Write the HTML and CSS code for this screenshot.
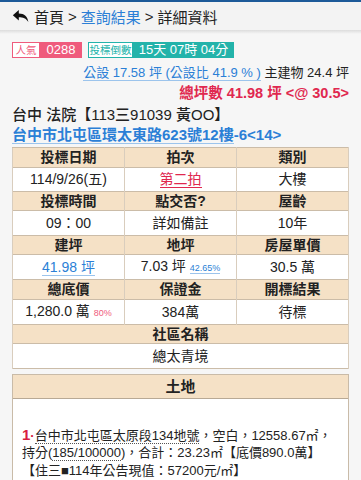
FILE: index.html
```html
<!DOCTYPE html>
<html lang="zh-Hant">
<head>
<meta charset="utf-8">
<title>詳細資料</title>
<link rel="stylesheet" href="styles.css">
</head>
<body>
<header class="topbar">
  <svg class="back" viewBox="0 0 20 16" width="17" height="14"><path d="M8 1 L1 7.2 L8 13.4 V9.4 C13 9.4 16.5 10.6 19.2 15 C18.6 9 14.5 5 8 5 Z" fill="#111"/></svg>
  <span class="crumb">首頁</span><span class="sep">&gt;</span><span class="crumb link">查詢結果</span><span class="sep">&gt;</span><span class="crumb">詳細資料</span>
</header>
<div class="shadow"></div>
<main class="content">
  <div class="badges">
    <span class="tag pink"><span class="lbl">人氣</span><span class="val">0288</span></span>
    <span class="tag teal"><span class="lbl">投標倒數</span><span class="val">15天 07時 04分</span></span>
  </div>
  <div class="area"><span class="ul blue">公設 17.58 坪 (公設比 41.9 % )</span> 主建物 24.4 坪</div>
  <div class="total">總坪數 41.98 坪 &lt;@ 30.5&gt;</div>
  <div class="case">台中 法院【113三91039 黃OO】</div>
  <div class="addr"><span class="ul">台中市北屯區環太東路623號12樓</span>-6&lt;14&gt;</div>
  <table class="info">
    <tr class="th"><td>投標日期</td><td>拍次</td><td>類別</td></tr>
    <tr class="td"><td>114/9/26(五)</td><td><span class="red ul-red">第二拍</span></td><td>大樓</td></tr>
    <tr class="th"><td>投標時間</td><td>點交否?</td><td>屋齡</td></tr>
    <tr class="td"><td>09：00</td><td>詳如備註</td><td>10年</td></tr>
    <tr class="th"><td>建坪</td><td>地坪</td><td>房屋單價</td></tr>
    <tr class="td"><td><span class="blue ul">41.98 坪</span></td><td>7.03 坪 <span class="small blue ul">42.65%</span></td><td>30.5 萬</td></tr>
    <tr class="th"><td>總底價</td><td>保證金</td><td>開標結果</td></tr>
    <tr class="td"><td>1,280.0 萬 <span class="small pinktext">80%</span></td><td>384萬</td><td>待標</td></tr>
    <tr class="th"><td colspan="3">社區名稱</td></tr>
    <tr class="td"><td colspan="3">總太青境</td></tr>
  </table>
  <section class="land">
    <div class="land-head">土地</div>
    <div class="land-body">
      <p class="item"><b class="num">1</b><span class="dot">·</span><span class="dul">台中市北屯區太原段134地號</span>，空白，12558.67㎡，<br>持分(<span class="dul">185/100000</span>)，合計：23.23㎡【底價890.0萬】<br>【住三■114年公告現值：57200元/㎡】</p>
    </div>
  </section>
</main>
</body>
</html>
```
FILE: styles.css
```css
* { box-sizing: border-box; }
html, body { margin: 0; padding: 0; }
body {
  background: #f6f6f6;
  font-family: "Liberation Sans", "Noto Sans CJK TC", sans-serif;
  color: #222;
  width: 361px;
  overflow: hidden;
}
.topbar {
  border-top: 2px solid #1d5a99;
  background: #f3f3f3;
  height: 30px;
  display: flex;
  align-items: center;
  padding-left: 12px;
  font-size: 15px;
  color: #222;
}
.back { margin-right: 5px; }
.sep { margin: 0 4px; }
.link { color: #2b7fd6; }
.shadow {
  height: 4px;
  background: linear-gradient(#dcdcdc, #f6f6f6);
}
.content { padding: 0 12px 0 12px; }
.badges { display: flex; gap: 6px; margin-top: 8px; height: 16px; }
.tag { display: flex; height: 16px; font-size: 10.5px; line-height: 14px; }
.tag .lbl { border: 1px solid; background: #fff; text-align: center; }
.tag .val { color: #fff; font-size: 13px; line-height: 16px; text-align: center; }
.tag.pink .lbl { border-color: #ef5b7c; color: #ef5b7c; width: 28px; }
.tag.pink .val { background: #ef5b7c; width: 42px; }
.tag.teal .lbl { border-color: #23b3aa; color: #23b3aa; width: 45px; }
.tag.teal .val { background: #23b3aa; width: 101px; }
.area { text-align: right; font-size: 13px; line-height: 20px; margin-top: 5px; }
.blue { color: #2b7fd6; }
.ul { border-bottom: 1px solid #9cc4ec; }
.total { text-align: right; font-size: 14.5px; font-weight: bold; color: #e0284f; line-height: 20px; }
.case { font-size: 15px; line-height: 20px; margin-top: 2px; font-weight: 500; }
.addr { font-size: 15px; font-weight: bold; color: #2b7fd6; line-height: 20px; margin-bottom: 2px; }
.info {
  width: 100%;
  border-collapse: collapse;
  background: #fff;
  font-size: 14px;
  text-align: center;
  border: 1px solid #cbbca8;
}
.info td { width: 33.33%; border-left: 1px solid #d9cdbd; border-right: 1px solid #d9cdbd; padding: 0; }
.info .th td { background: #f5e1c6; font-weight: bold; height: 19.6px; line-height: 18px; border-top: 1px solid #cbbca8; }
.info .td td { height: 24.2px; line-height: 22px; border-top: 1px solid #cbbca8; }
.red { color: #e0284f; }
.ul-red { border-bottom: 1px solid #e0284f; }
.small { font-size: 9px; }
.pinktext { color: #ef5b7c; }
.land {
  margin-top: 5px;
  border: 1px solid #c9bba8;
  background: #fff;
}
.land-head {
  background: #f5e1c6;
  text-align: center;
  font-size: 15px;
  font-weight: bold;
  height: 24px;
  line-height: 24px;
  border-bottom: 1px solid #b8a995;
}
.land-body { padding: 27px 6px 10px 9px; }
.item { margin: 0; font-size: 13px; line-height: 17.5px; white-space: nowrap; }
.num { color: #d81d3f; font-size: 15px; }
.dot { color: #d81d3f; font-weight: bold; }
.dul { border-bottom: 1px dotted #555; }
```
